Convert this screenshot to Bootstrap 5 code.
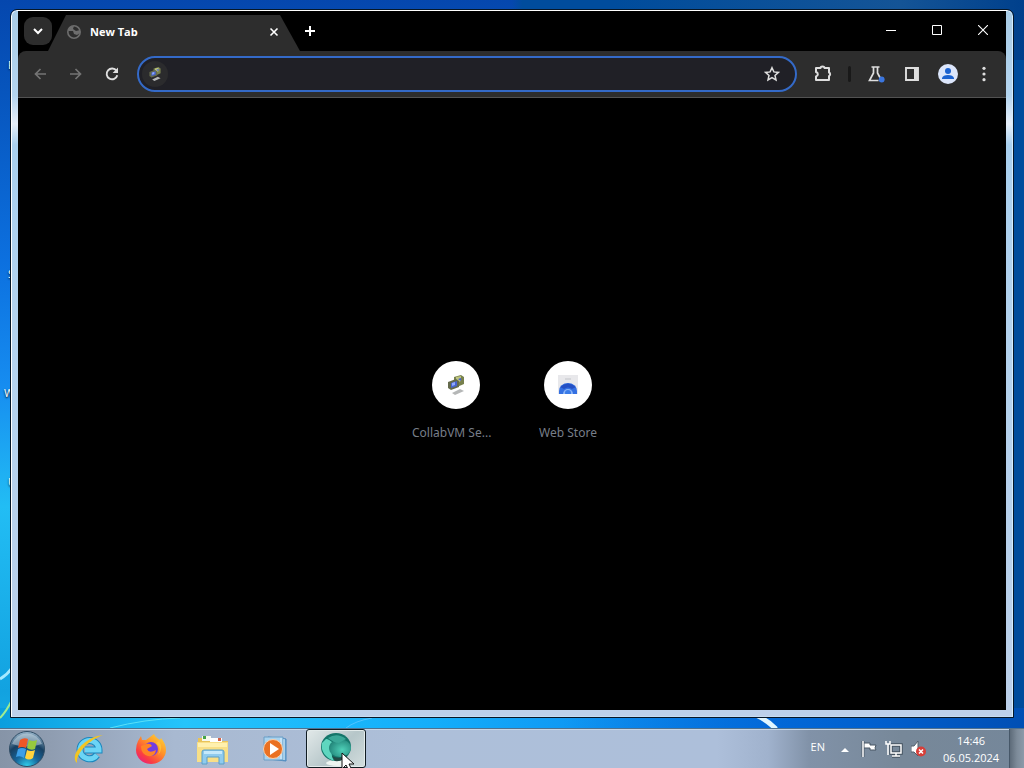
<!DOCTYPE html>
<html lang="en">
<head>
<meta charset="utf-8">
<meta name="viewport" content="width=device-width, initial-scale=1">
<title>New Tab</title>
<link href="https://cdn.jsdelivr.net/npm/bootstrap@5.3.0/dist/css/bootstrap.min.css" rel="stylesheet">
<script src="https://cdn.jsdelivr.net/npm/bootstrap@5.3.0/dist/js/bootstrap.bundle.min.js"></script>
<style>
  body { font-family: "Open Sans", "Noto Sans", sans-serif; font-size: 12px; line-height: 16px; }
  button { border: 0; background: none; padding: 0; color: inherit; }
  svg { display: block; flex: none; }
  .desktop {
    background:
      linear-gradient(90deg, transparent 55%, #0060cf 85%, #004fb4) bottom / 100% 60px no-repeat,
      linear-gradient(90deg, #0a9ede, #25c4fb 18%, #14aefa 42%, #087bea 75%) bottom / 100% 60px no-repeat,
      linear-gradient(90deg, transparent 60%, #145496 88%, #00408c) top / 100% 60px no-repeat,
      linear-gradient(90deg, transparent 50%, #004c9c 51%),
      linear-gradient(180deg, #0547ae, #0755bd 12%, #0c70df 34%, #168cf0 50%, #22bdf4 66%, #12a2e0 90%, #1db6ea);
  }
  .workspace { padding: 10px; }
  .win-frame {
    z-index: 1; padding: 0 6px 6px; border: 1px solid #fff; border-right-color: #d3edff; border-bottom-color: #c6dcf2;
    outline: 1px solid #061728; border-radius: 6px 6px 0 0; margin: 0 1px 1px;
    background: linear-gradient(180deg, #a9cce6, #b4d5f0 12%, #e6effa 16%, #a9d0ef 19%, #b3d2ee 45%, #bcd0ea);
  }
  .win-body { background: #000; }
  .titlebar { height: 40px; color: #fff; }
  .tab-search { width: 28px; height: 28px; border-radius: 9px; background: #2d2d2d; margin: 0 -4px 0 6px; }
  .tab-shape { width: 252px; height: 36px; padding: 0 21px 3px 18px; background: #2d2d2d; font-size: 11px; clip-path: polygon(18px 0, 232px 0, 252px 100%, 0 100%); }
  .win-btn { width: 46px; height: 38px; display: flex; align-items: center; justify-content: center; }
  .toolbar { height: 47px; background: #2d2d2d; border-bottom: 1px solid #525252; border-radius: 8px 8px 0 0; padding: 0 4px; color: #dedede; }
  .tool-btn { width: 36px; height: 36px; display: flex; align-items: center; justify-content: center; flex: none; }
  .faded { color: #747474; }
  .omnibox { height: 36px; border: 2px solid #346ac8; border-radius: 18px; background: #202026; padding: 0 5px 0 3px; margin-left: 7px; }
  .omnibox input { background: transparent; border: 0; outline: 0; color: #eee; }
  .site-chip { width: 26px; height: 26px; border-radius: 50%; background: #2b2b2d; display: flex; align-items: center; justify-content: center; }
  .tool-sep { width: 3px; height: 16px; background: #191919; margin: 0 7px; border-radius: 2px; }
  .start-page { padding-bottom: 6px; }
  .tile { width: 112px; padding: 0 12px; font-family: "Noto Sans", sans-serif; color: #777e89; text-decoration: none; text-align: center; }
  .tile-icon { width: 48px; height: 48px; border-radius: 50%; background: #fff; margin: 0 auto 16px; display: flex; align-items: center; justify-content: center; }
  .taskbar {
    height: 40px; border-top: 1px solid #50718e; box-shadow: inset 0 1px #c6d6e7;
    background: linear-gradient(90deg, #8694a7, #8f9db1 5%, #a8b9d1 17%, #adbfd9 40%, #adbfda 70%, #a0b2cd 75%, #8192a8 79%, #778899 88%, #75879a);
  }
  .task-btn { width: 62px; height: 39px; display: flex; align-items: center; justify-content: center; }
  .task-active { border: 1px solid #101c22; border-radius: 3px; box-shadow: inset 0 0 0 1px #e2eaea; background: linear-gradient(135deg, #e2e9e9, #b6c6c9 55%, #d3dede); width: 60px; }
  .tray { color: #fff; font-size: 11px; }
  .tray-flag { margin-right: 6px; }
  .clock { width: 76px; text-align: center; line-height: 17px; }
  .peek { width: 15px; align-self: stretch; border-left: 1px solid #465768; background: linear-gradient(90deg, #5d6b79, #7d8b99 50%, #8b9aa9); }
  .desk-label { position: absolute; left: 8px; color: #fff; text-shadow: 0 1px 2px #000; font-size: 11px; }
  .desk-label.wide { left: 4px; }
  .pointer { position: absolute; left: 341px; bottom: 0; z-index: 3; height: 16px; overflow: hidden; }
  .streak { position: absolute; left: 0; bottom: 40px; }
</style>
</head>
<body>
<svg width="0" height="0" class="position-absolute" aria-hidden="true">
  <symbol id="vm" viewBox="0 0 20 20">
    <path d="M8 2l7-2 3 2v7l-7 3-3-2z" fill="#77804d"/><path d="M10 2l5-1v5l-5 2z" fill="#bec57e"/>
    <path d="M2 7l8-3 3 2v6l-8 3-3-2z" fill="#646a4c"/><path d="M5 8l6-2v5l-6 2z" fill="#4764cf"/>
    <path d="M6 8l3-1v3l-3 1z" fill="#8fa8ff"/><path d="M6 18l8-4 4 2-9 4z" fill="#b5b7b7"/><path d="M12 4l3-1v3z" fill="#415adc"/>
  </symbol>
</svg>
<div class="desktop vh-100 d-flex flex-column overflow-hidden position-relative">
  <span class="desk-label" style="top:57px">R</span>
  <span class="desk-label" style="top:266px">S</span>
  <span class="desk-label wide" style="top:385px">W</span>
  <span class="desk-label" style="top:474px">U</span>
  <svg class="streak" width="900" height="90" viewBox="0 0 900 90" fill="none" aria-hidden="true">
    <path d="M0 41Q7 37 12 30" stroke="#a6eaff" stroke-width="3"/><path d="M0 80Q6 74 12 62" stroke="#9fec91" stroke-width="2"/>
    <path d="M110 90Q145 81 180 80" stroke="#5ae0f8" stroke-width="1"/><path d="M346 90Q355 83 372 80" stroke="#51c4ff" stroke-width="1"/>
    <path d="M756 77Q767 82 776 91" stroke="#e0f6ff" stroke-width="5"/>
  </svg>

  <div class="workspace flex-grow-1 d-flex flex-column">
    <main class="win-frame flex-grow-1 d-flex flex-column position-relative">
      <div class="win-body flex-grow-1 d-flex flex-column">
        <header class="titlebar d-flex align-items-center">
          <button class="tab-search d-flex align-items-center justify-content-center" aria-label="Search tabs">
            <svg width="12" height="12" viewBox="0 0 12 12" fill="none" stroke="#fff" stroke-width="2"><path d="M2 4l4 4 4-4"/></svg>
          </button>
          <div class="tab-shape d-flex align-items-center align-self-end">
            <svg width="16" height="16" viewBox="0 0 16 16"><circle cx="8" cy="8" r="6.200" fill="none" stroke="#6d6d6d" stroke-width="1.600"/><path d="M2 7l2-4 4-1-1 3 3 2 4-1v3l-3 2-3-1-1-3z" fill="#6d6d6d"/></svg>
            <b class="flex-grow-1 ms-2">New Tab</b>
            <button aria-label="Close tab"><svg width="10" height="10" viewBox="0 0 10 10" stroke="#fff" stroke-width="1.600"><path d="M1.500 1.500l7 7m0-7l-7 7"/></svg></button>
          </div>
          <button class="ms-1" aria-label="New tab"><svg width="12" height="12" viewBox="0 0 12 12" stroke="#fff" stroke-width="2"><path d="M6 1v10M1 6h10"/></svg></button>
          <div class="ms-auto d-flex align-self-start">
            <button class="win-btn" aria-label="Minimize"><svg width="10" height="10" stroke="#fff"><path d="M0 5.500h10"/></svg></button>
            <button class="win-btn" aria-label="Maximize"><svg width="10" height="10" fill="none" stroke="#fff"><path d="M.5.5h9v9h-9z"/></svg></button>
            <button class="win-btn" aria-label="Close"><svg width="10" height="10" stroke="#fff" stroke-width="1.100"><path d="M0 0l10 10M10 0L0 10"/></svg></button>
          </div>
        </header>
        <nav class="toolbar d-flex align-items-center">
          <button class="tool-btn faded" aria-label="Back"><svg width="14" height="14" viewBox="0 0 14 14" fill="none" stroke="currentColor" stroke-width="1.700"><path d="M13 7H2.500M7.500 2L2.500 7l5 5"/></svg></button>
          <button class="tool-btn faded" aria-label="Forward"><svg width="14" height="14" viewBox="0 0 14 14" fill="none" stroke="currentColor" stroke-width="1.700"><path d="M1 7h10.500M6.500 2l5 5-5 5"/></svg></button>
          <button class="tool-btn" aria-label="Reload"><svg width="14" height="14" viewBox="0 0 14 14" fill="none" stroke="currentColor" stroke-width="1.900"><path d="M11.500 3.800A5.400 5.400 0 1 0 12.300 8.200"/><path d="M13 .6V6H7.600z" fill="currentColor" stroke="none"/></svg></button>
          <div class="omnibox flex-grow-1 d-flex align-items-center">
            <span class="site-chip"><svg width="14" height="14"><use href="#vm"/></svg></span>
            <input class="flex-grow-1" type="text" aria-label="Address and search bar">
            <button class="tool-btn" aria-label="Bookmark this tab"><svg width="16" height="16" viewBox="0 0 16 16" fill="none" stroke="currentColor" stroke-width="1.500"><path d="M8 1.700l1.900 4.200 4.500.5-3.400 3 1 4.500L8 11.600l-4 2.300 1-4.500-3.400-3 4.500-.5z"/></svg></button>
          </div>
          <button class="tool-btn ms-2" aria-label="Extensions"><svg width="18" height="18" viewBox="0 0 18 18" fill="none" stroke="currentColor" stroke-width="2"><path d="M2 3h4.500a2 1.500 0 0 1 4 0H15v4.500a2 2 0 0 1 0 3.600V15H2v-3.500a2.300 2.300 0 0 0 0-4.500z" stroke-linejoin="round"/></svg></button>
          <span class="tool-sep"></span>
          <button class="tool-btn" aria-label="Experiments"><svg width="18" height="18" viewBox="0 0 18 18"><path d="M4.500 2h8M6.500 2v6L2.500 15.500h9M10.500 2v6l3 5.500" fill="none" stroke="currentColor" stroke-width="1.700"/><circle cx="14.700" cy="14.500" r="2.900" fill="#3b76df"/></svg></button>
          <button class="tool-btn" aria-label="Side panel"><svg width="16" height="16" viewBox="0 0 16 16"><path d="M2 2h12v12H2z" fill="none" stroke="currentColor" stroke-width="1.900"/><path d="M10 2h4v12h-4z" fill="currentColor"/></svg></button>
          <button class="tool-btn" aria-label="Profile"><svg width="20" height="20" viewBox="0 0 20 20"><circle cx="10" cy="10" r="10" fill="#dce6fb"/><circle cx="10" cy="7" r="3" fill="#1b62d0"/><path d="M4 15v-1q1-3 6-3t6 3v1z" fill="#1b62d0"/></svg></button>
          <button class="tool-btn" aria-label="Menu"><svg width="4" height="16" viewBox="0 0 4 16" fill="currentColor"><circle cx="2" cy="2.300" r="1.600"/><circle cx="2" cy="8" r="1.600"/><circle cx="2" cy="13.700" r="1.600"/></svg></button>
        </nav>
        <section class="start-page flex-grow-1 d-flex align-items-center justify-content-center">
          <a href="#collabvm" class="tile"><span class="tile-icon"><svg width="20" height="20"><use href="#vm"/></svg></span><span class="d-block text-nowrap text-start">CollabVM Se...</span></a>
          <a href="#store" class="tile"><span class="tile-icon"><svg width="22" height="20" viewBox="0 0 22 20"><path d="M1 0h20v19H1z" fill="#e8e8eb"/><path d="M8 3h6v2H8z" fill="#d5d6da"/><path d="M2 19v-3a9 8 0 0 1 18 0v3z" fill="#3470e2"/><path d="M3 12q8-7 16 0l-4 2q-4-3-8 0z" fill="#2450c4"/><path d="M6 19a5 5 0 0 1 10 0" fill="#8bb4f7"/><circle cx="11" cy="18" r="3" fill="#397be8"/><path d="M0 19h22v1H0z" fill="#fff"/></svg></span><span class="d-block text-nowrap">Web Store</span></a>
        </section>
      </div>
    </main>
  </div>

  <footer class="taskbar d-flex align-items-center">
    <button aria-label="Start" class="ms-2">
      <svg width="38" height="38" viewBox="0 0 38 38">
        <defs><radialGradient id="orb" cx=".5" cy="1" r="1"><stop offset="0" stop-color="#31d3ef"/><stop offset=".35" stop-color="#17659a"/><stop offset=".65" stop-color="#174062"/><stop offset="1" stop-color="#9dbacf"/></radialGradient></defs>
        <circle cx="19" cy="19" r="17.500" fill="url(#orb)" stroke="#304d65"/><path d="M4 14a16 16 0 0 1 30 0Q19 19 4 14z" fill="#d9e6ee" opacity=".45"/>
        <path d="M12 10q4-3 8-1l-2 9q-4-2-8 0z" fill="#ee5727"/><path d="M21 10q4 2 8 0l-2 9q-4 2-8-1z" fill="#97c93e"/><path d="M10 19q4-2 8 0l-2 9q-4-3-8-1z" fill="#3b9fe8"/><path d="M19 20q4 2 8 0l-2 8q-4 3-8 0z" fill="#ffd33d"/>
      </svg>
    </button>
    <div class="d-flex ms-2 ps-1">
      <button class="task-btn" aria-label="Internet Explorer"><svg width="34" height="34" viewBox="0 0 34 34"><path d="M8 18a9.500 9.500 0 0 1 19 0H13M8 18a9.500 9.500 0 0 0 17 5" fill="none" stroke="#1b87be" stroke-width="7"/><path d="M8 18a9.500 9.500 0 0 1 19 0H13M8 18a9.500 9.500 0 0 0 17 5" fill="none" stroke="#6bd4f5" stroke-width="5"/><path d="M5 31C-3 24 12 5 31 3 17 8 4 21 5 31z" fill="#f3c522"/></svg></button>
      <button class="task-btn" aria-label="Firefox"><svg width="32" height="32" viewBox="0 0 32 32"><defs><linearGradient id="fox" x1="1" y1="0" x2=".2" y2="1"><stop stop-color="#ffe13d"/><stop offset=".45" stop-color="#ff9228"/><stop offset=".8" stop-color="#fa3d43"/><stop offset="1" stop-color="#e81d82"/></linearGradient></defs><path d="M3 8l3-5 1 4 4 0L19 1q1 3 6 6l1-2q5 6 5 12a15 14 0 0 1-30 0q0-5 2-9z" fill="url(#fox)"/><circle cx="16" cy="16" r="7" fill="#743de0"/><path d="M9 12q6-3 8 1l-5 3q2 5 9 1-1 7-8 6-7-2-7-10z" fill="#ff8426"/><path d="M21 10q6 5 2 12 6-7 1-14z" fill="#ffbd38"/></svg></button>
      <button class="task-btn" aria-label="File Explorer"><svg width="34" height="32" viewBox="0 0 34 32"><path d="M2 5h11l2 3h17v20H2z" fill="#e9c359"/><path d="M6 3h9v5H6z" fill="#f5f8ed"/><path d="M7 3h3v3H7z" fill="#44a447"/><path d="M14 5h12v4H14z" fill="#fff"/><path d="M22 5h3v3h-3z" fill="#d46348"/><path d="M1 9h31v20H1z" fill="#f8df87"/><path d="M2 10h29v4H2z" fill="#fff0ae"/><path d="M6 19q0-2 2-2h18q2 0 2 2v12h-5v-7H11v7H6z" fill="#8fcbee" stroke="#5a9fc7"/><path d="M8 18h18v3H8z" fill="#c5e9fb"/></svg></button>
      <button class="task-btn" aria-label="Media Player"><svg width="28" height="28" viewBox="0 0 28 28"><path d="M7 2l18 2v22L7 24z" fill="#73acd7" stroke="#4987bd"/><path d="M3 2h19v23H3z" fill="#a8d3ef" stroke="#6b9ec6"/><path d="M20 3v21M23 4v21" stroke="#e2f5ff"/><circle cx="12" cy="14" r="9.500" fill="#ea7122" stroke="#fad0ac"/><path d="M9 8l9 6-9 6z" fill="#fff"/></svg></button>
      <button class="task-btn task-active" aria-label="Browser"><svg width="36" height="36" viewBox="0 0 36 36"><defs><radialGradient id="ball" cx=".6" cy=".6" r=".7"><stop offset="0" stop-color="#4fd0b8"/><stop offset="1" stop-color="#1d7c72"/></radialGradient></defs><ellipse cx="20" cy="32" rx="12" ry="3" fill="#eef5f1"/><ellipse cx="18" cy="16" rx="15" ry="14" fill="#14756a"/><path d="M4 12Q2 24 16 30q-5-8 0-17-5-5-8-5z" fill="#5fd6bf"/><ellipse cx="22" cy="17" rx="11" ry="9" fill="url(#ball)"/><path d="M10 7q9-6 18 1l-7 4q-5 0-11-5z" fill="#3aa898"/><path d="M14 25q8 4 15-1-4 7-12 6z" fill="#244a45"/></svg></button>
    </div>
    <div class="tray ms-auto d-flex align-items-center align-self-stretch">
      <span class="pb-1 me-3">EN</span>
      <svg class="me-2" width="8" height="8" viewBox="0 0 8 8"><path d="M0 7l4-4 4 4z" fill="#fff"/></svg>
      <svg class="ms-1 tray-flag" width="18" height="18" viewBox="0 0 18 18"><path d="M2 1v16" stroke="#4c5a68" stroke-width="3"/><path d="M3 3h6v2h6l-1 3 1 2H9V8H3z" fill="#fff" stroke="#485764"/><path d="M2 1v16" stroke="#fff" stroke-width="1.500"/></svg>
      <svg class="me-2" width="18" height="18" viewBox="0 0 18 18" fill="none"><path d="M6 5h10v8H6zM7 16h8M11 13v3" stroke="#44525f" stroke-width="3.500"/><path d="M6 5h10v8H6zM7 16h8M11 13v3" stroke="#fff" stroke-width="1.500"/><path d="M1 1v3h4V1M3 4v11" stroke="#fff" stroke-width="1.500"/></svg>
      <svg width="18" height="18" viewBox="0 0 18 18"><path d="M0 6h3l4-5v15l-4-4H0z" fill="#fff" stroke="#52606c"/><circle cx="10" cy="11.500" r="5" fill="#d73e38"/><path d="M8 9.500l4 4m0-4l-4 4" stroke="#fff" stroke-width="1.500"/></svg>
      <time class="clock ms-1">14:46<br>06.05.2024</time>
      <button class="peek" aria-label="Show desktop"></button>
    </div>
  </footer>
  <div class="pointer"><svg width="14" height="20" viewBox="0 0 14 20"><path d="M1 1v16l4-4 3 6 3-1-3-6h5z" fill="#fff" stroke="#111"/></svg></div>
</div>
</body>
</html>
